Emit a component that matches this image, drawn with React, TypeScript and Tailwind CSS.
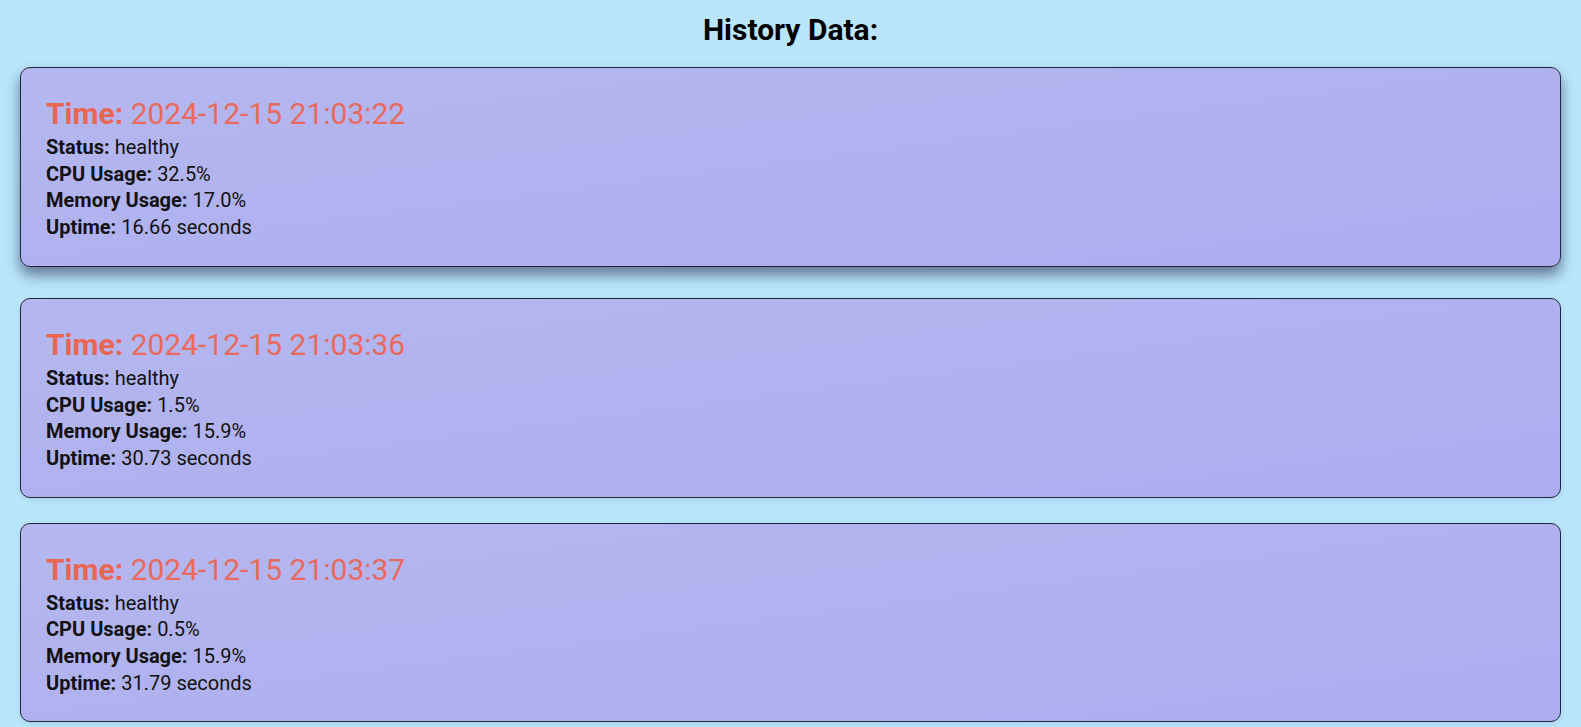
import React from 'react';

interface HistoryEntry {
  time: string;
  status: string;
  cpu: string;
  memory: string;
  uptime: string;
}

const history: HistoryEntry[] = [
  { time: '2024-12-15 21:03:22', status: 'healthy', cpu: '32.5%', memory: '17.0%', uptime: '16.66 seconds' },
  { time: '2024-12-15 21:03:36', status: 'healthy', cpu: '1.5%', memory: '15.9%', uptime: '30.73 seconds' },
  { time: '2024-12-15 21:03:37', status: 'healthy', cpu: '0.5%', memory: '15.9%', uptime: '31.79 seconds' },
];

const HistoryCard: React.FC<{ entry: HistoryEntry; active?: boolean }> = ({ entry, active = false }) => (
  <div
    className={`rounded-[10px] border border-[#23253a] bg-gradient-to-br from-[#b5b7ef] to-[#abadf0] px-[25px] pt-[26px] pb-[25px] ${
      active
        ? '-translate-y-[6px] shadow-[0_8px_14px_rgba(40,45,80,0.6)]'
        : 'shadow-[0_2px_6px_rgba(40,45,80,0.12)]'
    }`}
  >
    <h3 className="text-[30px] leading-[40px] text-[#e96a5c]">
      <span className="font-bold text-[#ea6552]">Time:</span> {entry.time}
    </h3>
    <div className="text-[20px] leading-[26.7px] text-[#111]">
      <p>
        <span className="font-bold">Status:</span> {entry.status}
      </p>
      <p>
        <span className="font-bold">CPU Usage:</span> {entry.cpu}
      </p>
      <p>
        <span className="font-bold">Memory Usage:</span> {entry.memory}
      </p>
      <p>
        <span className="font-bold">Uptime:</span> {entry.uptime}
      </p>
    </div>
  </div>
);

export default function App() {
  return (
    <div className="min-h-screen bg-[#bae6fd] px-[20px] pt-[12px] pb-6 font-['Roboto',sans-serif]">
      <h2 className="text-center text-[30px] leading-[36px] font-bold text-black">History Data:</h2>
      <div className="mt-[25px] flex flex-col gap-[25px]">
        {history.map((entry, i) => (
          <HistoryCard key={entry.time} entry={entry} active={i === 0} />
        ))}
      </div>
    </div>
  );
}
